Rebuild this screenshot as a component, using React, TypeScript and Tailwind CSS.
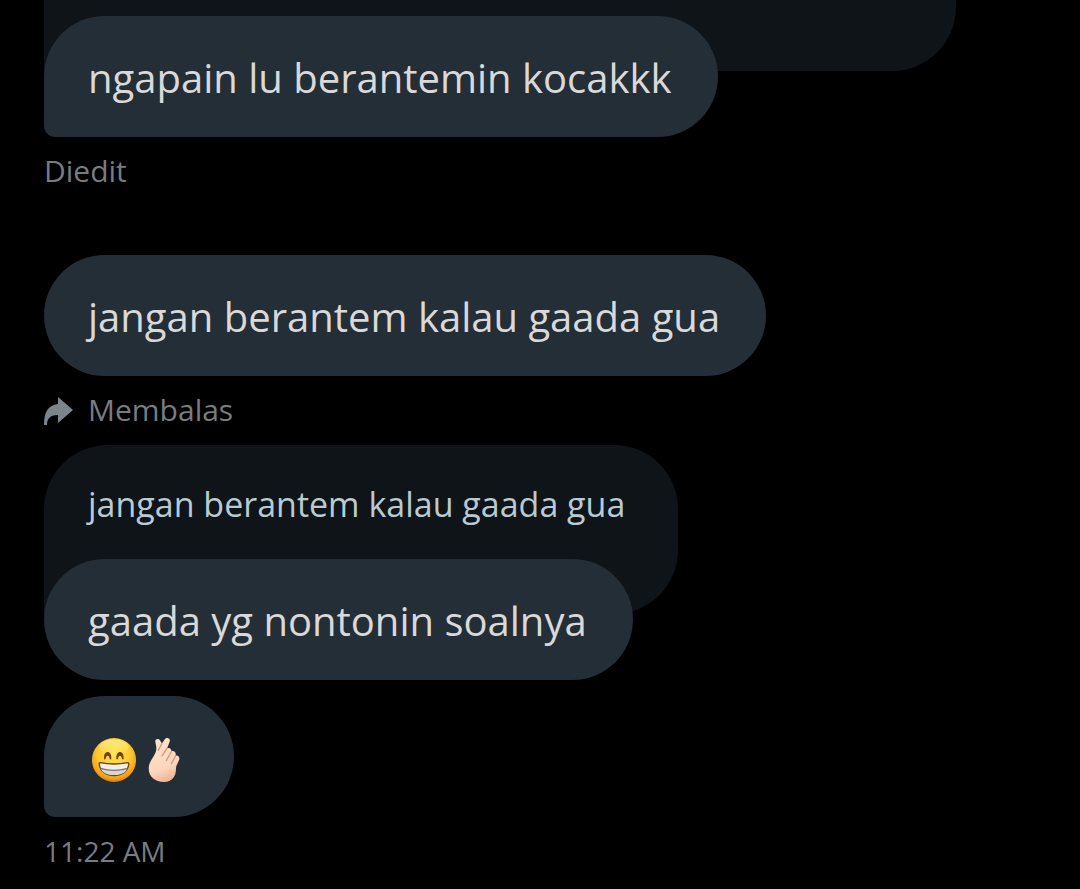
import React from 'react';

const GrinEmoji = () => (
  <svg viewBox="0 0 132 132" className="size-11" role="img" aria-label="beaming face">
    <defs>
      <radialGradient id="face" cx="0.5" cy="0.36" r="0.66">
        <stop offset="0" stopColor="#ffe650" />
        <stop offset="0.55" stopColor="#fdcb30" />
        <stop offset="0.85" stopColor="#f3a01d" />
        <stop offset="1" stopColor="#cf7610" />
      </radialGradient>
      <linearGradient id="shine" x1="0" y1="0" x2="0" y2="1">
        <stop offset="0" stopColor="#fff6b0" stopOpacity="0.6" />
        <stop offset="1" stopColor="#fff6b0" stopOpacity="0" />
      </linearGradient>
    </defs>
    <circle cx="66" cy="66" r="66" fill="url(#face)" />
    <ellipse cx="66" cy="28" rx="44" ry="24" fill="url(#shine)" />
    <path
      d="M36 62c-1-12 4-20 11-20s12 8 11 20c0 3-4 3-5 0-1-6-3-9-6-9s-5 3-6 9c-1 3-5 3-5 0Z"
      fill="#70430c"
    />
    <path
      d="M73 62c-1-12 4-20 11-20s12 8 11 20c0 3-4 3-5 0-1-6-3-9-6-9s-5 3-6 9c-1 3-5 3-5 0Z"
      fill="#70430c"
    />
    <path
      d="M25 74q41 8 82 0c3 0 4 2 3 6-3 21-21 33-44 33S25 101 22 80c-1-4 0-6 3-6Z"
      fill="#f1efed"
      stroke="#70430c"
      strokeWidth="4"
      strokeLinejoin="round"
    />
    <path d="M27 93q39 12 78 0c-5 13-20 18-39 18S32 106 27 93Z" fill="#d9d6d4" />
    <path d="M25 91q41 12 82 0" fill="none" stroke="#77706b" strokeWidth="4" />
  </svg>
);

const FingersEmoji = () => (
  <svg viewBox="0 0 93 134" className="h-11 w-8" role="img" aria-label="hand with crossed fingers">
    <defs>
      <linearGradient id="skin" x1="0.2" y1="0" x2="0.5" y2="1">
        <stop offset="0" stopColor="#fee3cd" />
        <stop offset="0.7" stopColor="#fdd6bd" />
        <stop offset="1" stopColor="#efb494" />
      </linearGradient>
    </defs>
    <path
      d="M20 11C19 1 32 0 35 8l5 9 9-13c5-8 19-3 15 7L56 31c7-3 14 2 13 10 8-4 15 3 13 13 8-2 14 5 10 14-4 11-9 15-9 26 0 24-12 40-36 40C18 134 0 117 0 94c0-16 6-24 14-37 6-10 8-15 9-22 1-9-2-16-3-24Z"
      fill="url(#skin)"
    />
    <path
      d="M40 17 29 38M56 31 41 54M69 41 54 68M82 54 69 78"
      fill="none"
      stroke="#d39a7c"
      strokeWidth="4"
      strokeLinecap="round"
    />
  </svg>
);

const ReplyIcon = () => (
  <svg viewBox="0 0 30 30" className="size-[30px]" aria-hidden="true">
    <path d="M14 2 29 15 14 28V20C7 20 3 23 3 30H0C0 17 4 10 14 9Z" fill="#7c848c" />
  </svg>
);

const Bubble = ({ children, tail }: any) => (
  <div
    className={`relative flex h-[121px] w-fit items-center rounded-[64px] bg-[#242e36] pt-0.5 pr-[46px] pl-11 text-[40px] leading-[56px] whitespace-nowrap text-[#d9d9d9] ${tail ? 'rounded-bl-xl' : ''}`}
  >
    {children}
  </div>
);

const Meta = ({ children }: any) => (
  <div className="flex h-[69px] items-center gap-[14px] pb-0.5 text-[30px] leading-10 text-[#787c81]">
    {children}
  </div>
);

export default function App() {
  return (
    <main className="min-h-screen overflow-hidden bg-black pl-11 font-['Open_Sans',sans-serif]">
      <div className="h-[71px] w-[912px] max-w-full rounded-br-[64px] bg-[#0f1418]"></div>
      <div className="-mt-[55px]">
        <Bubble tail>ngapain lu berantemin kocakkk</Bubble>
      </div>
      <Meta>Diedit</Meta>

      <div className="mt-[49px]">
        <Bubble>jangan berantem kalau gaada gua</Bubble>
      </div>
      <Meta>
        <ReplyIcon />
        Membalas
      </Meta>
      {/* quoted message, the reply overlaps its bottom */}
      <div className="h-[169px] w-fit rounded-[64px] rounded-bl-none bg-[#0f1418] pt-[31px] pr-[53px] pl-11 text-[34px] leading-[56px] whitespace-nowrap text-[#b9cad3]">
        jangan berantem kalau gaada gua
      </div>
      <div className="-mt-[55px]">
        <Bubble>gaada yg nontonin soalnya</Bubble>
      </div>
      <div className="mt-4">
        <Bubble tail>
          <span className="flex items-center gap-3 pt-1 pr-2 pl-1">
            <GrinEmoji />
            <FingersEmoji />
          </span>
        </Bubble>
      </div>
      <Meta>
        <time className="text-[28px]">11:22 AM</time>
      </Meta>
    </main>
  );
}
